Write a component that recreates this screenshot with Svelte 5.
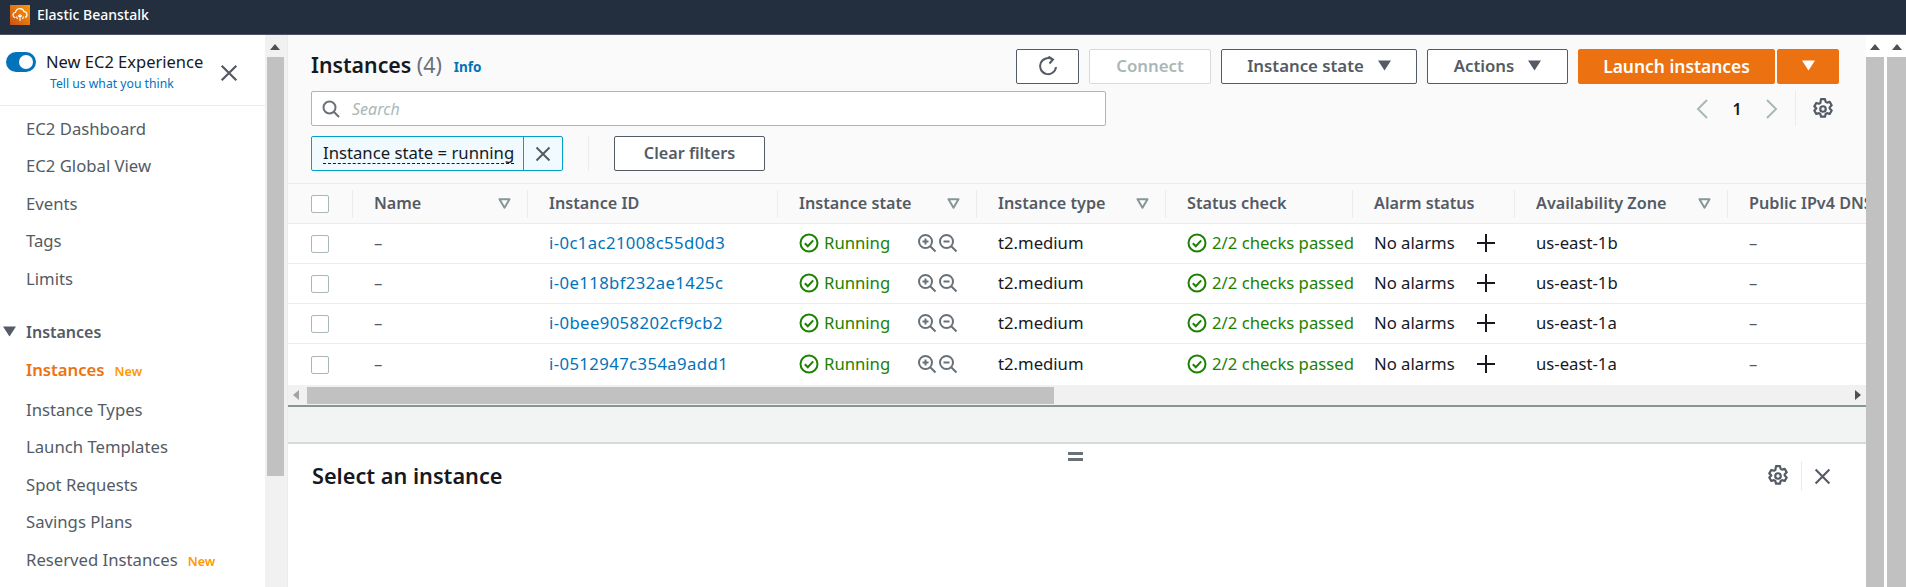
<script lang="ts">
	const navTop = ['EC2 Dashboard', 'EC2 Global View', 'Events', 'Tags', 'Limits'];
	const navInstances = [
		{ label: 'Instances', isNew: true, active: true },
		{ label: 'Instance Types' },
		{ label: 'Launch Templates' },
		{ label: 'Spot Requests' },
		{ label: 'Savings Plans' },
		{ label: 'Reserved Instances', isNew: true }
	];
	const columns = [
		{ label: 'Name', filter: true },
		{ label: 'Instance ID' },
		{ label: 'Instance state', filter: true },
		{ label: 'Instance type', filter: true },
		{ label: 'Status check' },
		{ label: 'Alarm status' },
		{ label: 'Availability Zone', filter: true },
		{ label: 'Public IPv4 DNS' }
	];
	const rows = [
		{ id: 'i-0c1ac21008c55d0d3', zone: 'us-east-1b' },
		{ id: 'i-0e118bf232ae1425c', zone: 'us-east-1b' },
		{ id: 'i-0bee9058202cf9cb2', zone: 'us-east-1a' },
		{ id: 'i-0512947c354a9add1', zone: 'us-east-1a' }
	];
</script>

{#snippet close(size)}
	<svg class="icon" width={size} height={size} viewBox="0 0 16 16"><path d="M1.5 1.5l13 13M14.5 1.5l-13 13" fill="none" stroke="currentColor" stroke-width="2" /></svg>
{/snippet}

{#snippet gear()}
	<svg class="icon" width="22" height="22" viewBox="0 0 20 20" fill="none" stroke="currentColor" stroke-width="2">
		<circle cx="10" cy="10" r="2.5" />
		<path d="M8.2 1h3.600l.6 2.500 1.300.7 2.400-.7 1.800 3.100-1.800 1.800v1.200l1.800 1.800-1.800 3.100-2.400-.7-1.300.7-.6 2.500H8.200l-.6-2.500-1.300-.7-2.400.7-1.800-3.100 1.800-1.800V9.400L2.100 7.600l1.800-3.100 2.400.7 1.300-.7z" stroke-linejoin="round" />
	</svg>
{/snippet}

{#snippet check()}
	<svg class="icon" width="20" height="20" viewBox="0 0 20 20" fill="none" stroke="currentColor" stroke-width="2"><circle cx="10" cy="10" r="8.500" /><path d="M5.800 10.200l3 3 5.400-5.800" /></svg>
{/snippet}

{#snippet zoom(plus)}
	<svg class="icon" width="20" height="20" viewBox="0 0 20 20" fill="none" stroke="currentColor" stroke-width="2">
		<circle cx="8.500" cy="8.500" r="6.500" /><path d="M13.500 13.500l5 5M5.500 8.500h6" />
		{#if plus}<path d="M8.500 5.500v6" />{/if}
	</svg>
{/snippet}

{#snippet filter()}
	<svg class="filter" width="13" height="11" viewBox="0 0 13 11"><path d="M1.500 1.200h10l-5 8.500z" fill="#fff" stroke="#879596" stroke-width="2" stroke-linejoin="round" /></svg>
{/snippet}

{#snippet caret()}
	<svg class="caret" width="13" height="11" viewBox="0 0 13 11"><path d="M0 .500h13L6.500 10.500z" fill="currentColor" /></svg>
{/snippet}

{#snippet vbar(clsName)}
	<div class="vbar {clsName}">
		<svg class="arrow" width="10" height="6" viewBox="0 0 10 6"><path d="M5 0l5 6H0z" fill="#505050" /></svg>
		<div class="vthumb"></div>
	</div>
{/snippet}

<div class="app">
	<header class="topbar">
		<svg width="20" height="20" viewBox="0 0 20 20">
			<defs>
				<linearGradient id="logo" x1="0" y1="1" x2="1" y2="0">
					<stop offset="0" stop-color="#c8511b" />
					<stop offset="1" stop-color="#ff9900" />
				</linearGradient>
			</defs>
			<rect width="20" height="20" fill="url(#logo)" />
			<path d="M5.500 12.500a2.500 2.500 0 0 1 0-5 4.500 4.500 0 0 1 8.700-.8 3 3 0 0 1 .8 5.800" fill="none" stroke="#fff" stroke-width="1.200" />
			<path d="M10 16V9M7.500 14l-1-2.500M12.500 14l1-2.500M8 10.500l2 1.500 2-1.500" fill="none" stroke="#fff" stroke-width="1.100" />
		</svg>
		<span>Elastic Beanstalk</span>
	</header>

	<div class="body">
		<nav class="side">
			<div class="experience">
				<span class="toggle"><span class="knob"></span></span>
				<div class="exp-text">
					<div class="exp-title">New EC2 Experience</div>
					<a class="exp-link" href="#top">Tell us what you think</a>
				</div>
				<span class="exp-close">{@render close(18)}</span>
			</div>
			<ul class="nav">
				{#each navTop as item}
					<li>{item}</li>
				{/each}
			</ul>
			<div class="nav-group"><svg width="13" height="11" viewBox="0 0 13 11"><path d="M0 .500h13L6.500 10.500z" fill="#545b64" /></svg>Instances</div>
			<ul class="nav">
				{#each navInstances as item}
					<li class:active={item.active}>{item.label}{#if item.isNew}<span class="new">New</span>{/if}</li>
				{/each}
			</ul>
		</nav>
		{@render vbar('side-bar')}

		<main class="main">
			<section class="top">
				<div class="row title-row">
					<h1>Instances <span class="count">(4)</span></h1>
					<a class="info" href="#top">Info</a>
					<div class="actions">
						<button class="btn refresh" type="button">
							<svg class="icon" width="20" height="22" viewBox="0 0 20 22" fill="none" stroke="currentColor" stroke-width="2"><path d="M14.500 4.500A8 8 0 1 0 18 12" /><path d="M10.500 1.500l4.500 3-3.500 4" /></svg>
						</button>
						<button class="btn connect" type="button" disabled>Connect</button>
						<button class="btn state" type="button">Instance state {@render caret()}</button>
						<button class="btn menu" type="button">Actions {@render caret()}</button>
						<div class="launch">
							<button class="btn primary main-launch" type="button">Launch instances</button>
							<button class="btn primary launch-more" type="button">{@render caret()}</button>
						</div>
					</div>
				</div>
				<div class="row search-row">
					<div class="search">
						<svg class="icon" width="18" height="18" viewBox="0 0 18 18" fill="none" stroke="currentColor" stroke-width="2"><circle cx="7.500" cy="7.500" r="6" /><path d="M12 12l5 5" /></svg>
						<span>Search</span>
					</div>
					<div class="pager">
						<svg class="page-arrow" width="13" height="20" viewBox="0 0 13 20"><path d="M11 1L2 10l9 9" fill="none" stroke="currentColor" stroke-width="2" /></svg>
						<span class="page">1</span>
						<svg class="page-arrow" width="13" height="20" viewBox="0 0 13 20"><path d="M2 1l9 9-9 9" fill="none" stroke="currentColor" stroke-width="2" /></svg>
						<span class="pager-sep"></span>
						{@render gear()}
					</div>
				</div>
				<div class="row token-row">
					<div class="token">
						<span class="token-label"><span>Instance state = running</span></span>
						<span class="token-x">{@render close(16)}</span>
					</div>
					<span class="token-sep"></span>
					<button class="btn clear" type="button">Clear filters</button>
				</div>
			</section>

			<div class="table">
				<div class="tr head">
					<div class="cb-cell"><span class="cb"></span></div>
					{#each columns as col}
						<div class="th">{col.label}{#if col.filter}{@render filter()}{/if}</div>
					{/each}
				</div>
				{#each rows as row}
					<div class="tr">
						<div class="cb-cell"><span class="cb"></span></div>
						<div class="td muted">–</div>
						<div class="td"><a class="instance-id" href="#top">{row.id}</a></div>
						<div class="td state-cell">
							<span class="ok">{@render check()}Running</span>
							<span class="zooms">{@render zoom(true)}{@render zoom(false)}</span>
						</div>
						<div class="td">t2.medium</div>
						<div class="td"><span class="ok">{@render check()}2/2 checks passed</span></div>
						<div class="td alarm"><span class="alarm-text">No alarms</span>
							<svg class="plus" width="18" height="18" viewBox="0 0 18 18"><path d="M9 0v18M0 9h18" stroke="#16191f" stroke-width="2" /></svg>
						</div>
						<div class="td">{row.zone}</div>
						<div class="td muted">–</div>
					</div>
				{/each}
			</div>

			<div class="hbar">
				<svg width="6" height="10" viewBox="0 0 6 10"><path d="M6 0v10L0 5z" fill="#a3a3a3" /></svg>
				<div class="hthumb"></div>
				<svg width="6" height="10" viewBox="0 0 6 10"><path d="M0 0v10l6-5z" fill="#505050" /></svg>
			</div>
			<div class="band"></div>

			<section class="detail">
				<div class="handle"></div>
				<h2>Select an instance</h2>
				<div class="detail-tools">
					{@render gear()}
					<span class="pager-sep"></span>
					{@render close(17)}
				</div>
			</section>
		</main>

		{@render vbar('main-bar')}
		{@render vbar('page-bar')}
	</div>
</div>

<style>
	:global(body) {
		margin: 0;
		background: #fff;
	}
	.app {
		width: 1906px;
		height: 587px;
		display: flex;
		flex-direction: column;
		overflow: hidden;
		font-family: 'Noto Sans', 'Open Sans', sans-serif;
		font-size: 16.700px;
		color: #16191f;
	}
	a {
		color: #0073bb;
		text-decoration: none;
	}
	.icon {
		display: block;
		flex: none;
	}
	ul {
		list-style: none;
		margin: 0;
		padding: 0;
	}

	.topbar {
		flex: none;
		box-sizing: border-box;
		padding: 5px 0 0 10px;
		display: flex;
		gap: 7px;
		background: #232f3e;
		border-bottom: 1px solid #4a5462;
		height: 35px;
		color: #fff;
		font-size: 14px;
		font-weight: 500;
	}
	.topbar span {
		line-height: 20px;
	}

	.body {
		flex: 1;
		min-height: 0;
		display: flex;
	}

	.side {
		flex: none;
		width: 265px;
		color: #545b64;
		overflow: hidden;
	}
	.experience {
		height: 71px;
		box-sizing: border-box;
		border-bottom: 1px solid #eaeded;
		display: flex;
		padding: 17px 0 0 6px;
	}
	.toggle {
		flex: none;
		width: 30px;
		height: 20px;
		border-radius: 10px;
		background: #0073bb;
		display: flex;
		justify-content: flex-end;
		align-items: center;
		padding-right: 3px;
		box-sizing: border-box;
	}
	.knob {
		width: 14px;
		height: 14px;
		border-radius: 50%;
		background: #fff;
	}
	.exp-text {
		margin-left: 10px;
		width: 174px;
	}
	.exp-title {
		font-size: 16.500px;
		line-height: 20px;
		color: #16191f;
		white-space: nowrap;
	}
	.exp-link {
		display: block;
		margin: 3px 0 0 4px;
		font-size: 12.200px;
		line-height: 18px;
		white-space: nowrap;
	}
	.exp-close {
		margin-top: 12px;
		color: #545b64;
	}
	.nav li {
		height: 37.500px;
		line-height: 37.500px;
		padding-left: 26px;
		white-space: nowrap;
	}
	.experience + .nav {
		margin-top: 3.500px;
	}
	.nav li.active {
		height: 40.300px;
		color: #ec7211;
		font-weight: 600;
	}
	.new {
		margin-left: 10px;
		color: #ff9900;
		font-size: 12.600px;
		font-weight: 600;
	}
	.nav-group {
		margin-top: 15.500px;
		height: 38px;
		display: flex;
		align-items: center;
		gap: 10px;
		padding-left: 3px;
		font-weight: 600;
		font-size: 16px;
	}

	.vbar {
		flex: none;
		background: #f1f1f1;
		display: flex;
		flex-direction: column;
		align-items: center;
		padding-top: 9px;
		box-sizing: border-box;
	}
	.arrow {
		flex: none;
		margin-bottom: 7px;
	}
	.vthumb {
		flex: 1;
		width: 17px;
		background: #c1c1c1;
	}
	.side-bar {
		border-right: 1px solid #eaeded;
		width: 23px;
		padding-right: 2px;
	}
	.side-bar .vthumb {
		flex: none;
		height: 419px;
	}
	.main-bar {
		width: 20px;
		background: #fff;
		align-items: flex-start;
	}
	.main-bar .arrow {
		margin-left: 4px;
	}
	.page-bar {
		width: 20px;
		background: #fff;
		align-items: flex-end;
	}
	.page-bar .arrow {
		margin-right: 4px;
	}
	.main-bar .vthumb {
		width: 18px;
	}
	.page-bar .vthumb {
		width: 19px;
	}

	.main {
		flex: none;
		width: 1578px;
		display: flex;
		flex-direction: column;
		min-width: 0;
	}
	.top {
		flex: none;
		height: 149px;
		box-sizing: border-box;
		background: #fafafa;
		border-bottom: 1px solid #eaeded;
		padding: 14px 27px 0 23px;
		display: flex;
		flex-direction: column;
		gap: 7px;
	}
	.row {
		display: flex;
		align-items: center;
		height: 35px;
	}
	.token-row {
		margin-top: 3px;
	}
	h1 {
		margin: -4px 0 0;
		font-size: 21.300px;
		font-weight: 600;
		color: #16191f;
	}
	.count {
		font-weight: 400;
		color: #687078;
	}
	.info {
		margin-left: 12px;
		font-size: 13.500px;
		font-weight: 700;
	}
	.actions {
		margin-left: auto;
		display: flex;
		gap: 10px;
	}
	.btn {
		height: 35px;
		box-sizing: border-box;
		border: 1px solid #545b64;
		border-radius: 2px;
		background: #fff;
		color: #545b64;
		font: 600 16.800px 'Noto Sans', 'Open Sans', sans-serif;
		padding: 0 0 2px;
		display: flex;
		align-items: center;
		justify-content: center;
		gap: 14px;
		white-space: nowrap;
	}
	.refresh {
		width: 63px;
	}
	.connect {
		width: 122px;
		border-color: #d5dbdb;
		color: #aab7b8;
	}
	.state {
		width: 196px;
	}
	.menu {
		width: 141px;
	}
	.launch {
		display: flex;
		gap: 2px;
	}
	.primary {
		background: #ec7211;
		border-color: #ec7211;
		color: #fff;
	}
	.main-launch {
		width: 197px;
		font-size: 17.400px;
	}
	.launch-more {
		width: 62px;
	}

	.search {
		width: 795px;
		height: 35px;
		box-sizing: border-box;
		background: #fff;
		border: 1px solid #aab7b8;
		border-radius: 2px;
		display: flex;
		align-items: center;
		gap: 12px;
		padding-left: 10px;
		color: #687078;
	}
	.search span {
		font-style: italic;
		color: #aab7b8;
		font-size: 16px;
	}
	.pager {
		margin-left: auto;
		display: flex;
		align-items: center;
		color: #545b64;
		height: 35px;
		margin-right: 5px;
	}
	.page-arrow {
		color: #aab7b8;
	}
	.page {
		color: #16191f;
		font-weight: 600;
		width: 56px;
		text-align: center;
		font-size: 16px;
	}
	.pager-sep {
		width: 1px;
		height: 35px;
		background: #eaeded;
		margin: 0 16px 0 17px;
	}
	.token {
		width: 252px;
		height: 35px;
		box-sizing: border-box;
		border: 1px solid #00a1c9;
		border-radius: 2px;
		background: #f1faff;
		display: flex;
	}
	.token-label {
		width: 212px;
		box-sizing: border-box;
		padding-left: 11px;
		display: flex;
		align-items: center;
		border-right: 1px solid #00a1c9;
		white-space: nowrap;
	}
	.token-label span {
		border-bottom: 1px dashed #16191f;
		line-height: 20px;
	}
	.token-x {
		flex: 1;
		display: flex;
		align-items: center;
		justify-content: center;
		color: #545b64;
	}
	.token-sep {
		width: 1px;
		height: 35px;
		background: #eaeded;
		margin: 0 25px;
	}
	.clear {
		width: 151px;
		font-size: 16.200px;
	}

	.table {
		flex: none;
		width: 100%;
		overflow: hidden;
	}
	.tr {
		display: grid;
		grid-template-columns: 65px 175px 250px 199px 189px 187px 162px 213px 138px;
		height: 40px;
		box-sizing: border-box;
		border-bottom: 1px solid #eaeded;
		background: #fff;
		align-items: center;
	}
	.tr.head {
		height: 40px;
		background: #fafafa;
		border-bottom: 1px solid #eaeded;
	}
	.tr:last-child {
		border-bottom: none;
		height: 41px;
	}
	.cb-cell {
		padding-left: 23px;
		display: flex;
	}
	.head .cb-cell {
		border-right: 1px solid #eaeded;
		height: 28px;
		align-items: center;
	}
	.cb {
		width: 18px;
		height: 18px;
		box-sizing: border-box;
		border: 1px solid #aab7b8;
		border-radius: 2px;
		background: #fff;
	}
	.th {
		height: 28px;
		line-height: 26px;
		box-sizing: border-box;
		padding: 0 16px 2px 21px;
		font-size: 16.200px;
		font-weight: 600;
		color: #545b64;
		border-right: 1px solid #eaeded;
		white-space: nowrap;
		display: flex;
		justify-content: space-between;
		align-items: center;
	}
	.th:last-child {
		border-right: none;
		justify-content: flex-start;
	}
	.filter {
		flex: none;
		margin-top: 2px;
	}
	.td {
		padding-left: 21px;
		padding-bottom: 2px;
		white-space: nowrap;
		overflow: hidden;
		display: flex;
		align-items: center;
	}
	.instance-id {
		letter-spacing: 0.400px;
	}
	.muted {
		color: #545b64;
	}
	.ok {
		display: flex;
		align-items: center;
		gap: 5px;
		color: #1d8102;
	}
	.state-cell {
		justify-content: space-between;
		padding-right: 19px;
	}
	.zooms {
		display: flex;
		gap: 1px;
		color: #687078;
	}
	.alarm-text {
		width: 103px;
	}
	.plus {
		flex: none;
	}

	.hbar {
		flex: none;
		height: 20px;
		background: #f1f1f1;
		display: flex;
		align-items: center;
		padding: 0 5px;
		gap: 8px;
		border-bottom: 2px solid #879596;
	}
	.hthumb {
		width: 747px;
		height: 17px;
		background: #c1c1c1;
		margin-right: auto;
	}
	.band {
		flex: none;
		height: 35px;
		background: #f2f3f3;
		border-bottom: 2px solid #d5dbdb;
	}
	.detail {
		flex: 1;
		position: relative;
		background: #fff;
		display: flex;
		align-items: flex-start;
		padding: 19px 35px 0 24px;
	}
	.handle {
		position: absolute;
		left: 780px;
		top: 8px;
		width: 15px;
		height: 3px;
		border-top: 3px solid #687078;
		border-bottom: 3px solid #687078;
	}
	h2 {
		margin: 0;
		font-size: 21.700px;
		font-weight: 600;
		line-height: 26px;
		color: #16191f;
	}
	.detail-tools {
		margin-left: auto;
		display: flex;
		align-items: center;
		color: #545b64;
		margin-top: -2px;
	}
	.detail-tools .pager-sep {
		height: 30px;
		margin: 0 12px;
	}
</style>
